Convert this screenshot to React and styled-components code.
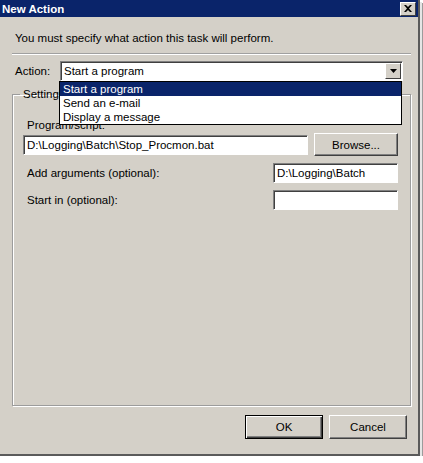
import React from 'react';
import styled, { createGlobalStyle } from 'styled-components';

const GlobalStyle = createGlobalStyle`
  html, body {
    margin: 0;
    padding: 0;
    background: #ffffff;
  }
  body {
    font-family: "Liberation Sans", Arial, sans-serif;
    font-size: 11px;
    color: #000;
  }
`;

const Window = styled.div`
  width: 420px;
  height: 456px;
  box-sizing: border-box;
  background: #d4d0c8;
  border-right: 2px solid #5a5a5a;
  border-bottom: 2px solid #5a5a5a;
  box-shadow: 2px 2px 0 #e6e6e6, 3px 3px 0 #9c9c9c;
  display: flex;
  flex-direction: column;
`;

const TitleBar = styled.div`
  height: 17px;
  flex: none;
  background: #0a246a;
  display: flex;
  align-items: center;
  justify-content: space-between;
  padding: 0 2px 0 2px;
`;

const Title = styled.span`
  color: #fff;
  font-weight: bold;
  font-size: 11.5px;
`;

const CloseButton = styled.div`
  width: 14px;
  height: 12px;
  background: #d4d0c8;
  border: 1px solid;
  border-color: #fff #404040 #404040 #fff;
  display: flex;
  align-items: center;
  justify-content: center;
`;

const Body = styled.div`
  flex: 1;
  display: flex;
  flex-direction: column;
  padding: 14px 7px 15px 12px;
`;

const Prompt = styled.div`
  padding-left: 3px;
  line-height: 14px;
  font-size: 11.5px;
`;

const Separator = styled.div`
  margin-top: 8px;
  border-top: 1px solid #a0a0a0;
  border-bottom: 1px solid #fff;
`;

const ActionRow = styled.div`
  margin-top: 6px;
  display: flex;
  align-items: center;
  position: relative;
  z-index: 2;
`;

const Label = styled.span`
  box-sizing: border-box;
  padding-left: ${p => p.$indent || 0}px;
  width: ${p => (p.$width ? `${p.$width}px` : 'auto')};
  line-height: 14px;
  font-size: 11.5px;
  white-space: nowrap;
`;

const Combo = styled.div`
  position: relative;
  width: 343px;
  height: 20px;
  box-sizing: border-box;
  background: #fff;
  border: 1px solid;
  border-color: #808080 #fff #fff #808080;
  box-shadow: inset 1px 1px 0 #404040;
  display: flex;
  align-items: center;
  padding-left: 3px;
  font-size: 11.5px;
`;

const ArrowButton = styled.div`
  position: absolute;
  right: 1px;
  top: 1px;
  width: 14px;
  height: 14px;
  background: #d4d0c8;
  border: 1px solid;
  border-color: #fff #404040 #404040 #fff;
  display: flex;
  align-items: center;
  justify-content: center;
`;

const DropList = styled.div`
  position: absolute;
  left: -2px;
  top: 19px;
  width: 343px;
  box-sizing: border-box;
  background: #fff;
  border: 1px solid #000;
`;

const Item = styled.div`
  height: 14px;
  line-height: 14px;
  padding-left: 3px;
  font-size: 11.5px;
  background: ${p => (p.$selected ? '#0a246a' : 'transparent')};
  color: ${p => (p.$selected ? '#fff' : '#000')};
`;

const Group = styled.fieldset`
  flex: 1;
  margin: 6px 0 0 0;
  min-width: 0;
  padding: 0 12px 0 10px;
  border: 1px solid #9c9c9c;
  box-shadow: 1px 1px 0 #fff, inset 1px 1px 0 #fff;
  display: flex;
  flex-direction: column;
`;

const Legend = styled.legend`
  margin-left: -3px;
  padding: 0 3px;
  line-height: 14px;
  font-size: 11.5px;
`;

const Row = styled.div`
  margin-top: ${p => p.$top || 0}px;
  display: flex;
  align-items: center;
  justify-content: space-between;
  gap: 6px;
`;

const TextBox = styled.div`
  width: ${p => p.$width}px;
  height: 20px;
  box-sizing: border-box;
  background: #fff;
  border: 1px solid;
  border-color: #808080 #fff #fff #808080;
  box-shadow: inset 1px 1px 0 #404040;
  display: flex;
  align-items: center;
  padding-left: 3px;
  font-size: 11.5px;
  white-space: nowrap;
  overflow: hidden;
`;

const Button = styled.div`
  width: ${p => p.$width || 78}px;
  height: ${p => p.$height || 24}px;
  box-sizing: border-box;
  background: #d4d0c8;
  border: 1px solid;
  border-color: ${p => (p.$default ? '#000' : '#fff #404040 #404040 #fff')};
  box-shadow: ${p =>
    p.$default
      ? 'inset 1px 1px 0 #fff, inset -1px -1px 0 #404040, inset -2px -2px 0 #808080'
      : 'inset -1px -1px 0 #808080'};
  display: flex;
  align-items: center;
  justify-content: center;
  font-size: 11.5px;
`;

const ButtonRow = styled.div`
  margin-top: 9px;
  padding-right: 4px;
  display: flex;
  justify-content: flex-end;
  gap: 6px;
`;

export default function App() {
  return (
    <>
      <GlobalStyle />
      <Window>
        <TitleBar>
          <Title>New Action</Title>
          <CloseButton>
            <svg width="8" height="7" viewBox="0 0 8 7">
              <path d="M0 0h2l2 2 2-2h2L5 3.5 8 7H6L4 5 2 7H0l3-3.5z" fill="#000" />
            </svg>
          </CloseButton>
        </TitleBar>
        <Body>
          <Prompt>You must specify what action this task will perform.</Prompt>
          <Separator />
          <ActionRow>
            <Label $indent={3} $width={48}>Action:</Label>
            <Combo>
              Start a program
              <ArrowButton>
                <svg width="7" height="4" viewBox="0 0 7 4">
                  <path d="M0 0h7L3.5 4z" fill="#000" />
                </svg>
              </ArrowButton>
              <DropList>
                <Item $selected>Start a program</Item>
                <Item>Send an e-mail</Item>
                <Item>Display a message</Item>
              </DropList>
            </Combo>
          </ActionRow>
          <Group>
            <Legend>Settings</Legend>
            <Row $top={17}>
              <Label $indent={4}>Program/script:</Label>
            </Row>
            <Row $top={1}>
              <TextBox $width={285}>D:\Logging\Batch\Stop_Procmon.bat</TextBox>
              <Button $width={84} $height={23}>Browse...</Button>
            </Row>
            <Row $top={7}>
              <Label $indent={4}>Add arguments (optional):</Label>
              <TextBox $width={125}>D:\Logging\Batch</TextBox>
            </Row>
            <Row $top={7}>
              <Label $indent={4}>Start in (optional):</Label>
              <TextBox $width={125} />
            </Row>
          </Group>
          <ButtonRow>
            <Button $default>OK</Button>
            <Button>Cancel</Button>
          </ButtonRow>
        </Body>
      </Window>
    </>
  );
}
